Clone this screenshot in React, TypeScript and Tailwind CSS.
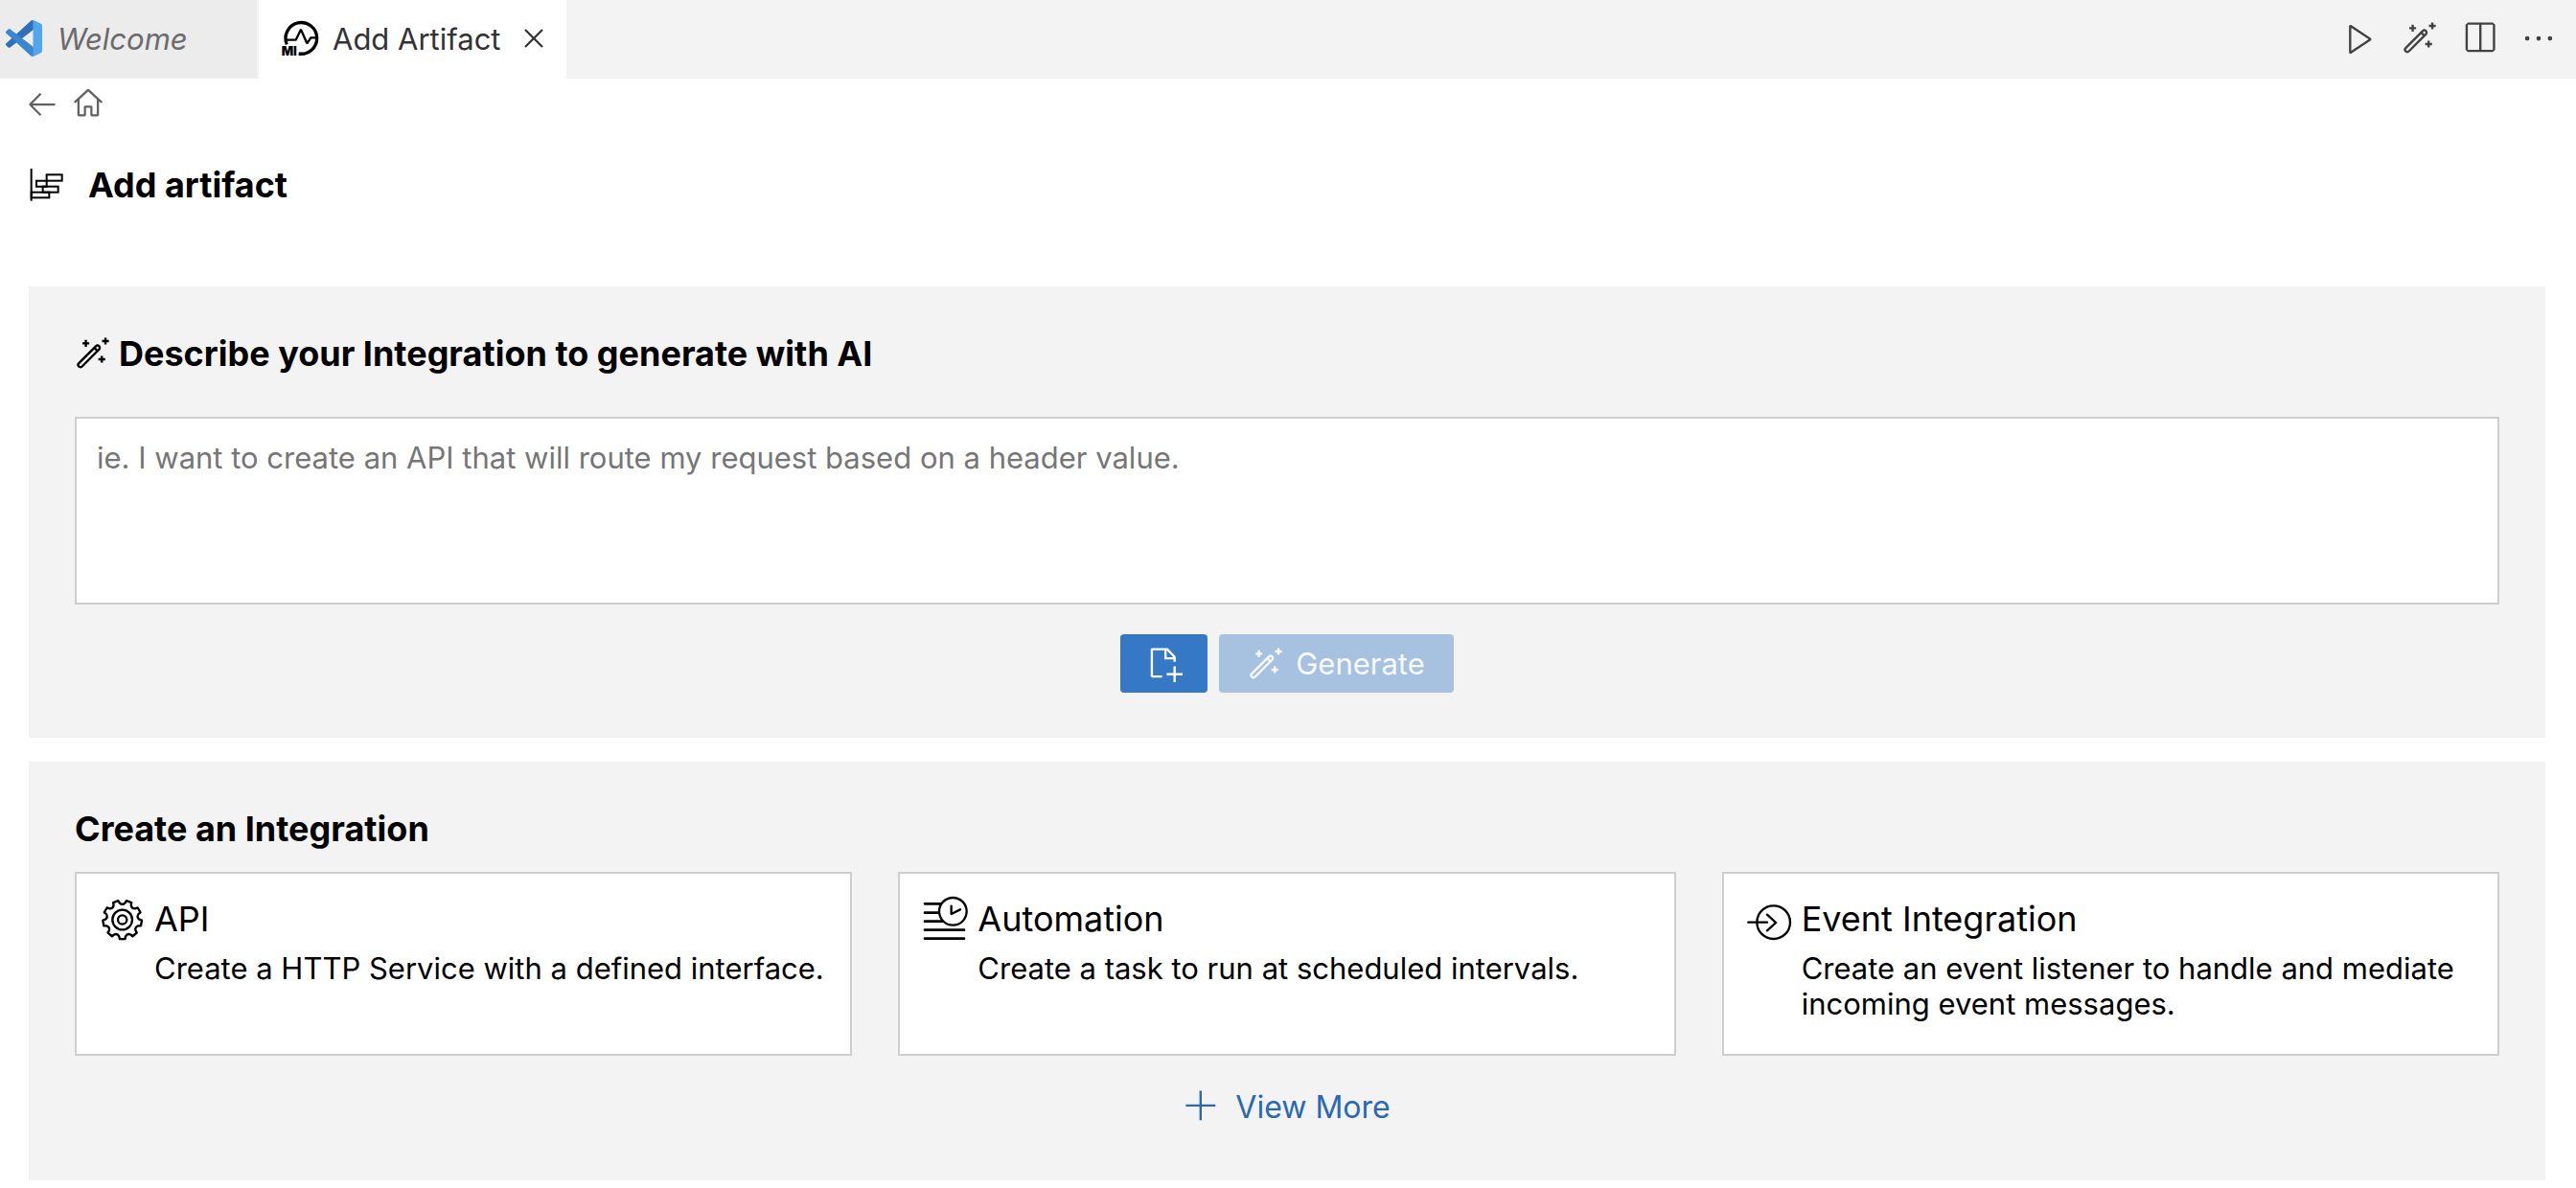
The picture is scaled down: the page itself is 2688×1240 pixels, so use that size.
import type { ReactNode } from "react";
import {
  VscAdd,
  VscArrowLeft,
  VscClose,
  VscEllipsis,
  VscHome,
  VscNewFile,
  VscPlay,
  VscSplitHorizontal,
  VscWand,
} from "react-icons/vsc";

function VsCodeLogo() {
  return (
    <svg viewBox="0 0 100 100" className="size-[38px] shrink-0" aria-hidden="true">
      <path
        fill="#2f70b8"
        d="M96.46 10.8L75.86.88C73.47-.27 70.62.21 68.75 2.08L1.3 63.58c-1.81 1.65-1.81 4.51 0 6.17l5.51 5c1.49 1.35 3.72 1.45 5.32.24l81.23-61.62C96.09 11.3 100 13.25 100 16.67v-.24c0-2.4-1.38-4.59-3.54-5.63z"
      />
      <path
        fill="#3a86cf"
        d="M96.46 89.2l-20.6 9.92c-2.39 1.15-5.24.67-7.11-1.2L1.3 36.42c-1.81-1.65-1.81-4.51 0-6.17l5.51-5c1.49-1.35 3.72-1.45 5.32-.24l81.23 61.62c2.73 2.07 6.64.12 6.64-3.3v.24c0 2.4-1.38 4.59-3.54 5.63z"
      />
      <path
        fill="#53a5ee"
        d="M75.86 99.13c-2.39 1.15-5.24.66-7.11-1.21C71.06 100.22 75 98.59 75 95.33V4.67c0-3.26-3.94-4.9-6.25-2.59C70.62.21 73.47-.27 75.86.87l20.6 9.91c2.16 1.04 3.54 3.23 3.54 5.63v67.18c0 2.4-1.38 4.59-3.54 5.63l-20.6 9.91z"
      />
    </svg>
  );
}

function IntegratorLogo() {
  return (
    <svg viewBox="0 0 120 120" className="size-10 shrink-0" aria-hidden="true">
      <path d="M19 79A49 49 0 1 1 56 108" fill="none" stroke="#000" strokeWidth="10" />
      <path
        d="M18 65H47L63 32L82 76L94 58H116"
        fill="none"
        stroke="#000"
        strokeWidth="7"
        strokeLinejoin="bevel"
      />
      <text x="2" y="115" fontSize="39" fontWeight="900" className="font-['Inter',sans-serif]">
        MI
      </text>
    </svg>
  );
}

function ArtifactIcon() {
  return (
    <svg viewBox="0 0 108 108" className="size-9 shrink-0" aria-hidden="true">
      <g fill="none" stroke="#000" strokeWidth="6">
        <path d="M8 3V104" />
        <rect x="56" y="22" width="48" height="19" />
        <path d="M56 41H24V59H56V41" />
        <rect x="44" y="59" width="48" height="18" />
        <rect x="8" y="77" width="56" height="17" />
      </g>
    </svg>
  );
}

const TEETH = 9;

function gearPath(cx: number, cy: number, tip: number, root: number) {
  const at = (deg: number, r: number) => {
    const a = (deg * Math.PI) / 180;
    return `${(cx + r * Math.cos(a)).toFixed(1)} ${(cy + r * Math.sin(a)).toFixed(1)}`;
  };
  const parts: string[] = [];
  for (let i = 0; i < TEETH; i += 1) {
    const c = 90 + (i * 360) / TEETH;
    parts.push(
      `${i === 0 ? "M" : "L"}${at(c - 8, tip)}`,
      `L${at(c + 8, tip)}`,
      `L${at(c + 11, root + 3)}`,
      `Q${at(c + 20, root - 5)} ${at(c + 29, root + 3)}`,
    );
  }
  return `${parts.join("")}Z`;
}

function GearIcon() {
  return (
    <svg viewBox="0 0 144 144" className="size-12 shrink-0" aria-hidden="true">
      <g fill="none" stroke="#000" strokeWidth="7" strokeLinejoin="round">
        <path d={gearPath(71, 78, 61, 50)} />
        <circle cx="71" cy="78" r="31" />
        <circle cx="71" cy="78" r="14" />
      </g>
    </svg>
  );
}

function ScheduleIcon() {
  return (
    <svg viewBox="0 0 144 144" className="size-12 shrink-0" aria-hidden="true">
      <g fill="none" stroke="#000" strokeWidth="8" strokeLinecap="round" strokeLinejoin="round">
        <circle cx="94" cy="52" r="43" strokeWidth="7" />
        <path d="M6 28H54M6 56H50M6 83H60M6 110H129M6 137H129" />
        <path d="M89 35V60L117 46" strokeWidth="7" />
      </g>
    </svg>
  );
}

function EventIcon() {
  return (
    <svg viewBox="0 0 144 144" className="size-12 shrink-0" aria-hidden="true">
      <g fill="none" stroke="#000" strokeWidth="7" strokeLinecap="round">
        <circle cx="83" cy="86" r="52" />
        <path d="M4 86H63M63 62L90 87L63 112" />
      </g>
    </svg>
  );
}

const CARDS: { title: string; text: string; icon: ReactNode }[] = [
  { title: "API", text: "Create a HTTP Service with a defined interface.", icon: <GearIcon /> },
  { title: "Automation", text: "Create a task to run at scheduled intervals.", icon: <ScheduleIcon /> },
  {
    title: "Event Integration",
    text: "Create an event listener to handle and mediate incoming event messages.",
    icon: <EventIcon />,
  },
];

function TabBar() {
  return (
    <header className="flex h-[82px] items-stretch bg-[#f3f3f3]">
      <div role="tablist" className="flex">
        <button
          role="tab"
          aria-selected="false"
          className="flex w-[270px] items-center gap-4 border-r-2 border-[#f3f3f3] bg-[#ececec] pb-0.5 pl-1.5 text-[#6b6b6b] italic"
        >
          <VsCodeLogo />
          Welcome
        </button>
        <div className="flex items-center bg-white pr-4 pb-0.5 pl-[23px] text-[#333]">
          <button role="tab" aria-selected="true" className="flex items-center gap-[14px]">
            <IntegratorLogo />
            Add Artifact
          </button>
          <button aria-label="Close" className="ml-4">
            <VscClose className="size-9" />
          </button>
        </div>
      </div>
      <div className="ml-auto flex items-center gap-6 pr-5 pb-0.5 text-[38px] text-[#424242]">
        <button aria-label="Run">
          <VscPlay />
        </button>
        <button aria-label="Generate with AI">
          <VscWand />
        </button>
        <button aria-label="Split editor">
          <VscSplitHorizontal />
        </button>
        <button aria-label="More actions">
          <VscEllipsis />
        </button>
      </div>
    </header>
  );
}

export default function App() {
  return (
    <div className="min-h-screen bg-white font-['Inter',sans-serif] text-[31px] leading-[37px] text-black">
      <TabBar />
      <nav className="mt-2.5 flex h-8 items-center gap-3 px-[26px] text-[36px] text-[#616161]">
        <button aria-label="Back">
          <VscArrowLeft />
        </button>
        <button aria-label="Home">
          <VscHome />
        </button>
      </nav>
      <main className="pr-8 pl-[30px]">
        <div className="mt-[45px] flex h-12 items-center gap-[26px]">
          <ArtifactIcon />
          <h1 className="text-[36px] font-bold">Add artifact</h1>
        </div>

        <section className="mt-[82px] bg-[#f3f3f3] px-12 pt-12 pb-[47px]">
          <h2 className="flex h-11 items-center gap-2 text-[36px] font-bold">
            <VscWand className="size-[38px]" />
            <label htmlFor="prompt">Describe your Integration to generate with AI</label>
          </h2>
          <textarea
            id="prompt"
            placeholder="ie. I want to create an API that will route my request based on a header value."
            className="mt-11 block h-[196px] w-full resize-none border-2 border-[#cecece] bg-white px-[21px] py-[22px] outline-none placeholder:text-[#767676]"
          />
          <div className="mt-[31px] flex justify-center gap-3 text-white">
            <button
              aria-label="Attach file"
              className="flex h-[61px] w-[91px] items-center justify-center rounded bg-[#3478c6]"
            >
              <VscNewFile className="size-[38px]" />
            </button>
            <button
              disabled
              className="flex h-[61px] items-center gap-3 rounded bg-[#a7c1e0] px-[30px] text-[#f7f9fc]"
            >
              <VscWand className="size-[38px]" />
              Generate
            </button>
          </div>
        </section>

        <section className="mt-[25px] bg-[#f3f3f3] px-12 pt-12 pb-[47px]">
          <h2 className="flex h-11 items-center text-[36px] font-bold">Create an Integration</h2>
          <div className="mt-[23px] grid grid-cols-3 gap-12">
            {CARDS.map((card) => (
              <button
                key={card.title}
                className="flex min-h-[192px] items-start gap-[9px] border-2 border-[#cecece] bg-white py-[22px] pr-4 pl-6 text-left"
              >
                {card.icon}
                <span>
                  <span className="block text-[36px] leading-[50px]">{card.title}</span>
                  <span className="mt-2 block">{card.text}</span>
                </span>
              </button>
            ))}
          </div>
          <div className="mt-[23px] flex justify-center">
            <a href="#more" className="flex h-[60px] items-center gap-4 text-[32px] text-[#2a69b2]">
              <VscAdd className="size-[38px]" />
              View More
            </a>
          </div>
        </section>
      </main>
    </div>
  );
}
